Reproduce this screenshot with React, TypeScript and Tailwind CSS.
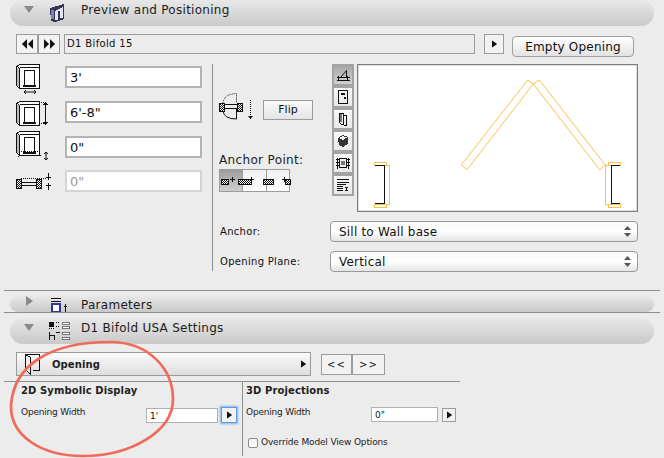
import React from 'react';

const font = { fontFamily: '"DejaVu Sans", "Liberation Sans", sans-serif' };

function Tri({ dir = 'right', className = '' }: { dir?: 'right' | 'left' | 'down'; className?: string }) {
  const pts = dir === 'right' ? '0,0 7,5 0,10' : dir === 'left' ? '7,0 0,5 7,10' : '0,0 10,0 5,7';
  return (
    <svg width={dir === 'down' ? 10 : 7} height={dir === 'down' ? 7 : 10} className={className}>
      <polygon points={pts} fill="currentColor" />
    </svg>
  );
}

function Bar({ open, title, height, titleClass, icon }: { open: boolean; title: string; height: string; titleClass: string; icon: React.ReactNode }) {
  return (
    <div className={`ml-[10px] w-[644px] ${height} rounded-r-[14px] rounded-l-[14px] bg-gradient-to-b from-[#e8e8e8] to-[#c9c9c9] flex items-center`}>
      <div className="w-[14px] ml-[12px] -mt-[7px] flex justify-center text-[#8b8b8b]">
        <Tri dir={open ? 'down' : 'right'} />
      </div>
      <div className="w-[24px] ml-[13px] flex justify-start">{icon}</div>
      <span className={`ml-[8px] text-[12px] text-[#1c1c1c] tracking-[0.28px] ${titleClass}`}>{title}</span>
    </div>
  );
}

function Field({ value, muted }: { value: string; muted?: boolean }) {
  return (
    <div className={`w-[137px] h-[22px] bg-white border-2 ${muted ? 'border-[#d4d4d4] text-[#9a9a9a]' : 'border-[#b4b4b4] text-[#111]'} text-[13px] pl-[3px] leading-[19px]`}>
      {value}
    </div>
  );
}

function SmallField({ value, width }: { value: string; width: string }) {
  return (
    <div className={`${width} h-[15px] bg-white border border-[#b0b0b0] text-[9px] pl-[3px] leading-[14px] text-[#111]`}>{value}</div>
  );
}

function Select({ value }: { value: string }) {
  return (
    <div className="w-[308px] h-[21px] rounded-[4px] border border-[#9a9a9a] bg-gradient-to-b from-[#f9f9f9] via-[#ffffff] to-[#e4e4e4] flex items-center justify-between pl-[8px] pr-[6px] text-[12px] text-[#111] tracking-[0.2px]">
      <span>{value}</span>
      <svg width="7" height="11"><polygon points="3.5,0 7,4 0,4" fill="#555" /><polygon points="0,7 7,7 3.5,11" fill="#555" /></svg>
    </div>
  );
}

function DoorBox() {
  return (
    <svg width="26" height="26" className="shrink-0" shapeRendering="crispEdges">
      <path d="M0.5 2.5 L3.5 0.5 H23.5 V24.5 H3.5 L0.5 21.5 Z" fill="#fff" stroke="#111" />
      <path d="M3.5 3.5 H23.5 M3.5 3.5 V24.5 M0.5 2.5 L3.5 3.5" fill="none" stroke="#111" />
      <rect x="1" y="4" width="2" height="18" fill="#bbb" />
      <rect x="8.5" y="6.5" width="10" height="15" fill="#fff" stroke="#111" />
      <rect x="7" y="21" width="13" height="2" fill="#111" />
    </svg>
  );
}

function ToolIcon({ n }: { n: number }) {
  const s = { fill: 'none', stroke: '#111' };
  return (
    <svg width="14" height="14" shapeRendering="crispEdges">
      {n === 0 && (
        <g {...s}>
          <path d="M0.5 9.5 H13.5 M0.5 12.5 H13.5 M2.5 8 V13 M11.5 8 V13" />
          <path d="M4.5 9.5 L10.5 2.5 V9.5" shapeRendering="auto" />
        </g>
      )}
      {n === 1 && (
        <g {...s}>
          <rect x="2.5" y="0.5" width="9" height="13" />
          <rect x="5" y="3" width="4" height="2" fill="#111" stroke="none" />
          <rect x="8" y="7" width="2" height="2" fill="#111" stroke="none" />
        </g>
      )}
      {n === 2 && (
        <g {...s}>
          <path d="M3.5 1.5 H7.5 V12.5 H5.5 L3.5 10.5 Z M7.5 3.5 H10.5 V13.5 H7.5" />
          <rect x="4" y="2" width="2" height="8" fill="#777" stroke="none" />
        </g>
      )}
      {n === 3 && (
        <g>
          <path d="M2 4 L7 1 L12 3 V10 L7 13 L3 11 Z" fill="#333" />
          <path d="M3 4 L7 2 L11 3.5 L7 6 Z" fill="#eee" />
        </g>
      )}
      {n === 4 && (
        <g {...s}>
          <path d="M1.5 1.5 V12.5 M12.5 1.5 V12.5 M0 3.5 H3 M0 6.5 H3 M0 9.5 H3 M11 3.5 H14 M11 6.5 H14 M11 9.5 H14" />
          <rect x="3.5" y="2.5" width="7" height="9" />
          <rect x="5" y="5" width="4" height="4" fill="#777" stroke="none" />
        </g>
      )}
      {n === 5 && (
        <g {...s}>
          <path d="M1 1.5 H13 M1 4.5 H13 M1 6.5 H10 M1 8.5 H7 M1 10.5 H7 M1 12.5 H7 M9 9.5 H12 M10.5 9.5 V12.5 M9 12.5 H12" />
        </g>
      )}
    </svg>
  );
}

export default function App() {
  return (
    <div className="relative w-[664px] h-[458px] overflow-hidden bg-[#ececec] text-[#111]" style={font}>
      <svg width="0" height="0" className="absolute">
        <defs>
          <pattern id="hatch" width="2" height="2" patternUnits="userSpaceOnUse">
            <rect width="2" height="2" fill="#fff" />
            <rect width="1" height="1" fill="#111" />
            <rect x="1" y="1" width="1" height="1" fill="#111" />
          </pattern>
        </defs>
      </svg>

      <Bar
        open
        title="Preview and Positioning"
        height="h-[26px]"
        titleClass="-mt-[7px]"
        icon={
          <svg width="18" height="20" shapeRendering="crispEdges">
            <path d="M1 5 L15 1 V16 L6 19 L2 18 Z" fill="#33365a" />
            <path d="M6 8 L14 4 V15 H11 V8 H9 V17 H6 Z" fill="#e8e8f4" />
            <rect x="2" y="7" width="3" height="9" fill="#7f83b8" />
          </svg>
        }
      />

      {/* name row */}
      <div className="flex items-start mt-[8px] ml-[16px] h-[23px]">
        <div className="flex w-[44px] h-[20px] border border-[#9c9c9c] bg-[#f2f2f2]">
          <div className="w-[22px] border-r-2 border-[#9c9c9c] flex items-center justify-center text-[#111]">
            <Tri dir="left" className="scale-x-75 -mr-[1px]" />
            <Tri dir="left" className="scale-x-75" />
          </div>
          <div className="flex-1 flex items-center justify-center text-[#111]">
            <Tri className="scale-x-75 -mr-[1px]" />
            <Tri className="scale-x-75" />
          </div>
        </div>
        <div className="ml-[4px] w-[411px] h-[20px] border border-[#9c9c9c] bg-[#ececec] pl-[2px] text-[10px] leading-[17px] tracking-[0.35px]">
          D1 Bifold 15
        </div>
        <div className="ml-[9px] w-[20px] h-[20px] border border-[#9c9c9c] bg-[#f2f2f2] flex items-center justify-center">
          <Tri className="scale-75" />
        </div>
        <div className="ml-[8px] mt-[2px] w-[122px] h-[21px] rounded-[4px] border border-[#a0a0a0] bg-gradient-to-b from-[#ffffff] to-[#e2e2e2] flex items-center justify-center text-[12px] tracking-[0.2px]">
          Empty Opening
        </div>
      </div>

      {/* main section */}
      <div className="flex mt-[7px] ml-[16px] h-[208px]">
        <div className="w-[196px] flex flex-col pt-[2px]">
          <div className="flex items-start h-[35px]">
            <div className="w-[49px] relative -mt-[2px]">
              <DoorBox />
              <svg width="14" height="6" className="absolute left-[8px] top-[25px]">
                <path d="M0 3 H12 M2 1 L0 3 L2 5 M10 1 L12 3 L10 5" fill="none" stroke="#111" />
              </svg>
            </div>
            <Field value="3'" />
          </div>
          <div className="flex items-start h-[35px]">
            <div className="w-[49px] relative">
              <DoorBox />
              <svg width="10" height="24" className="absolute left-[23px] top-0" shapeRendering="crispEdges">
                <path d="M0 1.5 H6 M0 22.5 H6" stroke="#111" strokeDasharray="1 1" />
                <path d="M6.5 2 V23 M4.5 4 L6.5 2 L8.5 4 M4.5 21 L6.5 23 L8.5 21" fill="none" stroke="#111" />
              </svg>
            </div>
            <Field value={'6\'-8"'} />
          </div>
          <div className="flex items-start h-[34px]">
            <div className="w-[49px] relative -mt-[5px]">
              <DoorBox />
              <svg width="26" height="14" className="absolute left-0 top-[19px]" shapeRendering="crispEdges">
                <path d="M3 1.5 H22" stroke="#111" strokeDasharray="1 1" />
                <path d="M2 6.5 H4 M24 5.5 H28" stroke="#111" strokeDasharray="1 1" />
              </svg>
              <svg width="10" height="10" className="absolute left-[25px] top-[20px]">
                <path d="M5 1 V9 M3 3 L5 1 L7 3 M3 7 L5 9 L7 7" fill="none" stroke="#111" />
              </svg>
            </div>
            <Field value={'0"'} />
          </div>
          <div className="flex items-start">
            <div className="w-[49px] pt-[3px]">
              <svg width="38" height="18" shapeRendering="crispEdges">
                <rect x="0.5" y="6.5" width="5" height="9" fill="url(#hatch)" stroke="#111" />
                <rect x="20.5" y="6.5" width="5" height="9" fill="url(#hatch)" stroke="#111" />
                <path d="M5 9.5 H20 M5 12.5 H20" stroke="#111" />
                <path d="M5 5.5 H30" stroke="#111" strokeDasharray="1 1" />
                <path d="M32.5 0 V7 M30 4.5 H35 M32.5 10 V17 M30 12.5 H35" stroke="#111" />
              </svg>
            </div>
            <Field value={'0"'} muted />
          </div>
        </div>

        <div className="w-[1px] h-[207px] bg-[#8e8e8e]" />

        <div className="flex flex-col">
          <div className="flex h-[148px]">
            <div className="w-[119px] flex flex-col pl-[6px]">
              <div className="flex items-center mt-[34px] h-[24px]">
                <svg width="38" height="34" className="shrink-0">
                  <path d="M4 10 Q5 1 17.5 0.5 V10" fill="none" stroke="#111" strokeDasharray="1 1" />
                  <path d="M4 18 Q5 26 17.5 26 V15" fill="none" stroke="#111" />
                  <path d="M5 11.5 H18 M5 15.5 H18" stroke="#111" />
                  <rect x="0.5" y="10.5" width="5" height="8" fill="url(#hatch)" stroke="#111" />
                  <rect x="18.5" y="10.5" width="5" height="8" fill="url(#hatch)" stroke="#111" />
                  <path d="M31.5 7 V26" fill="none" stroke="#111" strokeDasharray="1 1" />
                  <path d="M29 23 H34 L31.5 26 Z" fill="#111" />
                </svg>
                <div className="ml-[6px] w-[50px] h-[20px] border border-[#9c9c9c] bg-gradient-to-b from-[#fafafa] to-[#e4e4e4] flex items-center justify-center text-[11px]">
                  Flip
                </div>
              </div>
              <div className="mt-[30px] text-[12px] leading-[16px] text-[#222] tracking-[0.35px] whitespace-nowrap">Anchor Point:</div>
              <div className="relative mt-[1px] flex w-[71px] h-[23px] border border-[#9c9c9c]">
                <div className="flex-1 border-r border-[#9c9c9c] bg-gradient-to-b from-[#9d9d9d] to-[#cfcfcf]" />
                <div className="flex-1 border-r border-[#9c9c9c] bg-gradient-to-b from-[#f2f2f2] to-[#fdfdfd]" />
                <div className="flex-1 bg-gradient-to-b from-[#f2f2f2] to-[#fdfdfd]" />
                <svg width="71" height="21" className="absolute left-0 top-0" shapeRendering="crispEdges">
                  <rect x="1" y="9" width="7" height="5" fill="url(#hatch)" stroke="#111" />
                  <path d="M12.5 7 V12 M10 9.5 H15" stroke="#111" />
                  <rect x="18" y="9" width="13" height="5" fill="url(#hatch)" stroke="#111" />
                  <path d="M31.5 7 V12 M29 9.5 H34" stroke="#111" />
                  <rect x="43" y="9" width="10" height="5" fill="url(#hatch)" stroke="#111" />
                  <path d="M64.5 7 V12 M62 9.5 H67" stroke="#111" />
                  <rect x="65" y="9" width="5" height="5" fill="url(#hatch)" stroke="#111" />
                </svg>
              </div>
            </div>

            <div className="w-[22px] flex flex-col">
              {[0, 1, 2, 3, 4, 5].map((n) => (
                <div
                  key={n}
                  className={`w-[22px] h-[22px] border-2 border-[#a3a3a3] flex items-center justify-center ${n === 0 ? 'bg-gradient-to-b from-[#a8a8a8] to-[#d0d0d0]' : 'bg-gradient-to-b from-[#f8f8f8] to-[#e8e8e8]'}`}
                >
                  <ToolIcon n={n} />
                </div>
              ))}
            </div>

            <div className="ml-[3px] w-[281px] h-[148px] bg-white border border-[#7e7e7e] shadow-[inset_0_0_0_1px_#dcdcdc]">
              <svg width="279" height="146" className="block">
                <g fill="none" stroke="#fbc04e">
                  <polygon points="103.3,100 109,104.7 175.3,19 169.7,15" />
                  <polygon points="181.3,15 175.3,19 241.7,104.7 247.3,100" />
                </g>
                <g shapeRendering="crispEdges" fill="none">
                  <path d="M16.5 97.5 H28.5 V100.5 H16.5 Z M16.5 139.5 H28.5 V142.5 H16.5 Z M27.5 100.5 H31.5 V139.5 H27.5" stroke="#fbc04e" />
                  <path d="M17 100.5 H26.5 V138.5 H17" stroke="#111" />
                  <path d="M250.5 97.5 H262.5 V100.5 H250.5 Z M250.5 139.5 H262.5 V142.5 H250.5 Z M251.5 100.5 H247.5 V139.5 H251.5" stroke="#fbc04e" />
                  <path d="M262 100.5 H253.5 V138.5 H262" stroke="#111" />
                </g>
              </svg>
            </div>
          </div>

          <div className="flex items-center mt-[9px] h-[21px]">
            <span className="w-[117px] pl-[7px] text-[10px] tracking-[0.3px]">Anchor:</span>
            <Select value="Sill to Wall base" />
          </div>
          <div className="flex items-center mt-[9px] h-[21px]">
            <span className="w-[117px] pl-[7px] text-[10px] tracking-[0.3px]">Opening Plane:</span>
            <Select value="Vertical" />
          </div>
        </div>
      </div>

      <div className="mt-[18px] ml-[4px] w-[656px] h-[1px] bg-[#8e8e8e]" />
      <div className="mt-[5px]">
        <Bar
          open={false}
          title="Parameters"
          height="h-[16px]"
          titleClass="mt-[2px]"
          icon={
            <svg width="18" height="14" className="mt-[2px] ml-[1px]" shapeRendering="crispEdges">
              <path d="M1 0.5 H11 M1 3.5 H11" stroke="#111" />
              <rect x="1.5" y="6" width="8" height="8" fill="#fff" stroke="#33369a" strokeWidth="2" />
              <path d="M15.5 6 V14 M14 8 H17" stroke="#111" />
            </svg>
          }
        />
      </div>
      <div className="ml-[4px] w-[656px] h-[1px] bg-[#8e8e8e]" />
      <div className="mt-[5px]">
        <Bar
          open
          title="D1 Bifold USA Settings"
          height="h-[26px]"
          titleClass="-mt-[7px]"
          icon={
            <svg width="22" height="20" shapeRendering="crispEdges">
              <rect x="0" y="1" width="5" height="5" fill="#111" />
              <path d="M7 1.5 H10 M7 5.5 H10 M0 7.5 H5" stroke="#111" strokeDasharray="1 1" />
              <rect x="13.5" y="1.5" width="7" height="2" fill="#fff" stroke="#777" />
              <rect x="13.5" y="5.5" width="7" height="2" fill="#fff" stroke="#777" />
              <path d="M0.5 11 V19 M0.5 14.5 H5 M5 14 V19 M7 11.5 H11" stroke="#111" />
              <rect x="13.5" y="11.5" width="7" height="2" fill="#fff" stroke="#777" />
              <rect x="13.5" y="16.5" width="7" height="2" fill="#fff" stroke="#777" />
            </svg>
          }
        />
      </div>

      {/* tab chooser */}
      <div className="flex items-start mt-[8px] ml-[16px]">
        <div className="w-[295px] h-[24px] border border-[#9a9a9a] bg-gradient-to-b from-[#fafafa] to-[#dedede] flex items-center pr-[3px]">
          <svg width="16" height="22" className="ml-[8px] shrink-0" shapeRendering="crispEdges">
            <path d="M0.5 1.5 H14.5 V17.5 H8" fill="none" stroke="#111" />
            <path d="M5.5 4.5 L0.5 1.5 V17 L5.5 21 Z" fill="#eee" stroke="#111" />
          </svg>
          <span className="ml-[11px] text-[10px] font-bold text-[#222] tracking-[0.1px]">Opening</span>
          <Tri className="ml-auto text-[#111] scale-75" />
        </div>
        <div className="ml-[10px] mt-[2px] flex w-[64px] h-[21px] border border-[#9c9c9c] bg-[#f2f2f2] text-[10px]">
          <div className="w-1/2 border-r-2 border-[#9c9c9c] flex items-center justify-center tracking-[1px]">&lt;&lt;</div>
          <div className="w-1/2 flex items-center justify-center tracking-[1px]">&gt;&gt;</div>
        </div>
      </div>

      <div className="mt-[5px] ml-[4px] w-[456px] h-[1px] bg-[#8e8e8e]" />

      <div className="flex ml-[21px]">
        <div className="w-[221px] pt-[2px]">
          <div className="text-[10px] font-bold leading-[14px] tracking-[0.1px] text-[#222]">2D Symbolic Display</div>
          <div className="flex items-center mt-[9px]">
            <span className="w-[125px] text-[9px] text-[#222] tracking-[-0.2px] -mt-[4px]">Opening Width</span>
            <SmallField value="1'" width="w-[72px]" />
            <div className="ml-[3px] w-[16px] h-[16px] border border-[#5b9be0] shadow-[0_0_2px_1px_#7db2ea] bg-[#f2f2f2] flex items-center justify-center">
              <Tri className="scale-75" />
            </div>
          </div>
        </div>
        <div className="w-[1px] h-[74px] bg-[#8e8e8e]" />
        <div className="pl-[3px] pt-[2px]">
          <div className="text-[10px] font-bold leading-[14px] tracking-[0.1px] text-[#222]">3D Projections</div>
          <div className="flex items-center mt-[9px]">
            <span className="w-[125px] text-[9px] text-[#222] tracking-[-0.2px] -mt-[4px]">Opening Width</span>
            <SmallField value={'0"'} width="w-[67px]" />
            <div className="ml-[4px] w-[14px] h-[14px] border border-[#9c9c9c] bg-[#f2f2f2] flex items-center justify-center">
              <Tri className="scale-75" />
            </div>
          </div>
          <div className="flex items-center mt-[14px] ml-[2px]">
            <div className="w-[10px] h-[10px] rounded-[2px] border border-[#8a8a8a] bg-gradient-to-b from-[#f0f0f0] to-[#ffffff]" />
            <span className="ml-[3px] text-[9px] text-[#222] tracking-[-0.15px]">Override Model View Options</span>
          </div>
        </div>
      </div>

      {/* red annotation */}
      <svg width="664" height="458" className="absolute left-0 top-0 pointer-events-none">
        <path
          d="M11 405 C14 365 50 342 110 342 C150 342 173 370 173 399 C173 432 130 456 83 456 C40 456 10 435 11 405 Z"
          fill="none"
          stroke="#f26b5a"
          strokeWidth="2.7"
        />
      </svg>
    </div>
  );
}
